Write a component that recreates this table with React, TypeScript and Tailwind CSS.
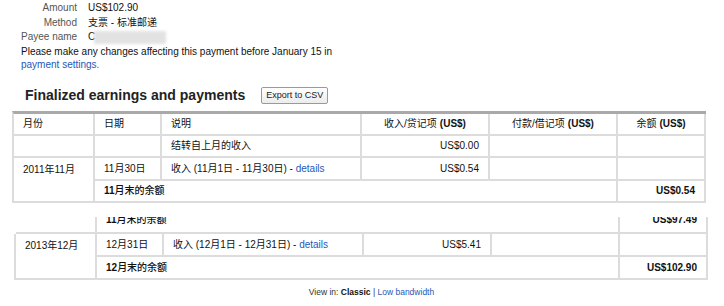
import React from "react";

const FONT = { fontFamily: '"Liberation Sans", Arial, "Noto Sans CJK SC", sans-serif' };
const COLS = "grid grid-cols-[81px_67px_200px_128px_128px_88px]";
const BASE = "flex border-r-2 border-b-2 border-[#dcdcdc] px-[9px] whitespace-nowrap";
const CELL = `${BASE} items-center`;
const TOP = `${BASE} items-start pt-[4px] row-span-2`;
const LINK = "text-[#2558b8]";

function Hd({ cn, us }: { cn: string; us?: boolean }) {
  return (
    <div className={`${CELL} ${us ? "justify-center" : ""}`}>
      <span>{cn}</span>
      {us && <span className="ml-[3px] font-bold">(US$)</span>}
    </div>
  );
}

function Income({ range }: { range: string }) {
  return (
    <span>
      收入 ({range}) - <span className={LINK}>details</span>
    </span>
  );
}

export default function App() {
  return (
    <div className="w-[724px] h-[306px] bg-white text-[10px] text-[#111] overflow-hidden" style={FONT}>
      {/* payment summary */}
      <div className="pl-[21px] pt-[1px]">
        {[
          ["Amount", "US$102.90"],
          ["Method", "支票 - 标准邮递"],
        ].map(([k, v]) => (
          <div key={k} className="flex leading-[14.5px] whitespace-nowrap">
            <span className="w-[56px] shrink-0 text-right text-[#555]">{k}</span>
            <span className="ml-[11px]">{v}</span>
          </div>
        ))}
        <div className="flex items-center leading-[14.5px] whitespace-nowrap">
          <span className="w-[56px] shrink-0 text-right text-[#555]">Payee name</span>
          <span className="ml-[11px]">C</span>
          <span className="ml-[-1px] inline-block w-[72px] h-[13px] bg-[#e2e2e2] blur-[1.5px]" />
        </div>
        <p className="leading-[13px]">
          Please make any changes affecting this payment before January 15 in
          <br />
          <span className={LINK}>payment settings.</span>
        </p>
      </div>

      {/* heading */}
      <div className="mt-[16px] pl-[25px] flex items-center h-[18px]">
        <h2 className="text-[14px] font-bold text-[#222]">Finalized earnings and payments</h2>
        <button className="ml-[16px] h-[17px] px-[4px] border border-[#9a9a9a] rounded-[2px] bg-gradient-to-b from-white to-[#ececec] text-[9px] leading-none text-[#222]">
          Export to CSV
        </button>
      </div>

      {/* table part 1 */}
      <div className={`${COLS} grid-rows-[22px_22px_23px_22px] mt-[6px] ml-[12px] w-[694px] border-l-2 border-t-[3px] border-l-[#dcdcdc] border-t-[#a9a9a9]`}>
        <Hd cn="月份" />
        <Hd cn="日期" />
        <Hd cn="说明" />
        <Hd cn="收入/贷记项" us />
        <Hd cn="付款/借记项" us />
        <Hd cn="余额" us />

        <div className={CELL} />
        <div className={CELL} />
        <div className={CELL}>结转自上月的收入</div>
        <div className={`${CELL} justify-end`}>US$0.00</div>
        <div className={CELL} />
        <div className={CELL} />

        <div className={TOP}>2011年11月</div>
        <div className={CELL}>11月30日</div>
        <div className={CELL}>
          <Income range="11月1日 - 11月30日" />
        </div>
        <div className={`${CELL} justify-end`}>US$0.54</div>
        <div className={CELL} />
        <div className={CELL} />

        <div className={`${CELL} col-span-4 font-bold`}>
          11<span className="font-medium">月末的余额</span>
        </div>
        <div className={`${CELL} justify-end font-bold`}>US$0.54</div>
      </div>

      {/* table part 2 (scrolled fragment) */}
      <div className="mt-[14px] ml-[14px] w-[696px]">
        <div className="h-[17px] overflow-hidden">
          <div className={`${COLS} grid-rows-[27px] -mt-[10px] ml-[2px]`}>
            <div className={CELL} />
            <div className={`${CELL} col-span-4 font-bold`}>
              11<span className="font-medium">月末的余额</span>
            </div>
            <div className={`${CELL} justify-end font-bold`}>US$97.49</div>
          </div>
        </div>
        <div className={`${COLS} grid-rows-[23px_23px] border-l-2 border-[#dcdcdc]`}>
          <div className={TOP}>2013年12月</div>
          <div className={CELL}>12月31日</div>
          <div className={CELL}>
            <Income range="12月1日 - 12月31日" />
          </div>
          <div className={`${CELL} justify-end`}>US$5.41</div>
          <div className={CELL} />
          <div className={CELL} />

          <div className={`${CELL} col-span-4 font-bold`}>
            12<span className="font-medium">月末的余额</span>
          </div>
          <div className={`${CELL} justify-end font-bold`}>US$102.90</div>
        </div>
      </div>

      <div className="mt-[5px] pl-[19px] flex justify-center text-[8.5px] leading-[14px] text-[#333]">
        <span>
          View in: <b className="text-[#111]">Classic</b> | <span className={LINK}>Low bandwidth</span>
        </span>
      </div>
    </div>
  );
}
